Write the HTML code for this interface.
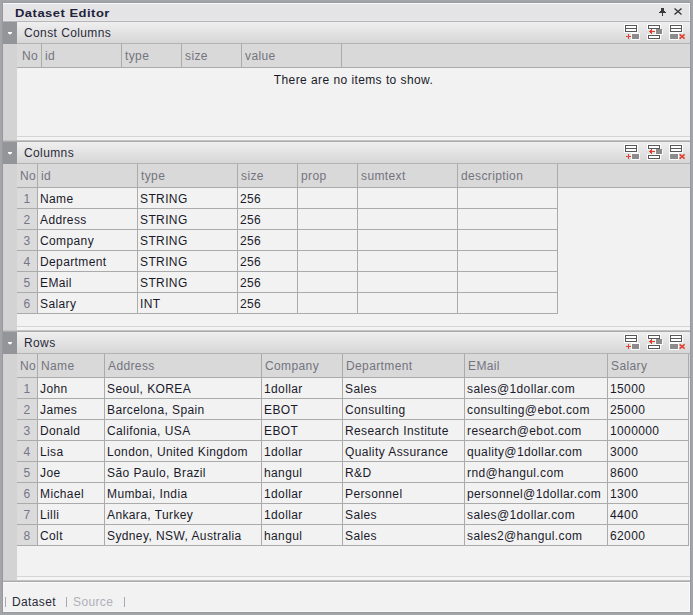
<!DOCTYPE html><html><head><meta charset="utf-8"><style>
*{margin:0;padding:0}
body{width:693px;height:615px;position:relative;overflow:hidden;background:#a3a5a8}
div{position:absolute}
.t,.h,.d,.n{font-family:"Liberation Sans",sans-serif;font-size:12px;line-height:14px;white-space:nowrap;letter-spacing:0.38px;word-spacing:0.2px}
.h{color:#74747f}
.d{color:#1a1a2a}
.n{color:#75758a}
</style></head><body><div style="left:0px;top:0px;width:693px;height:615px;background:#a3a5a8"></div><div style="left:2px;top:2px;width:689px;height:611px;background:#97999c"></div><div style="left:3px;top:3px;width:687px;height:609px;background:#f2f2f2"></div><div style="left:3px;top:3px;width:687px;height:18px;background:#e4e4e6"></div><div style="left:3px;top:3px;width:687px;height:1px;background:#fafafa"></div><div style="left:3px;top:20px;width:687px;height:1px;background:#e8e8ea"></div><div style="left:3px;top:21px;width:687px;height:1px;background:#b6b6b8"></div><div class="t" style="left:15px;top:6px;font-weight:bold;font-size:13px;letter-spacing:0.48px;word-spacing:0;color:#22223a;transform:scaleY(0.9);transform-origin:0 11px">Dataset Editor</div><div style="left:17px;top:22px;width:673px;height:21px;background:linear-gradient(#efefef,#d6d6d6)"></div><div style="left:3px;top:22px;width:14px;height:22px;background:#939598"></div><div style="left:8px;top:32px;width:4px;height:1px;background:#fff"></div><div style="left:9px;top:33px;width:2px;height:1px;background:#fff"></div><div style="left:8px;top:33px;width:1px;height:1px;background:#c8c8ca"></div><div style="left:11px;top:33px;width:1px;height:1px;background:#c8c8ca"></div><div style="left:9px;top:34px;width:2px;height:1px;background:#b0b0b2"></div><div style="left:17px;top:43px;width:673px;height:1px;background:#b3b3b6"></div><div class="t" style="left:24px;top:26px;color:#2a2a3a">Const Columns</div><div style="left:3px;top:44px;width:14px;height:97px;background:#d3d3d3"></div><div style="left:17px;top:44px;width:673px;height:23px;background:#d9d9d9"></div><div style="left:17px;top:67px;width:673px;height:1px;background:#ababab"></div><div style="left:17px;top:68px;width:673px;height:68px;background:#f2f2f2"></div><div style="left:17px;top:136px;width:673px;height:1px;background:#d5d5d5"></div><div style="left:17px;top:137px;width:673px;height:3px;background:#f4f4f4"></div><div style="left:3px;top:140px;width:687px;height:1px;background:#c2c2c2"></div><div style="left:3px;top:141px;width:687px;height:1px;background:#ababab"></div><div style="left:41px;top:44px;width:1px;height:23px;background:#ababab"></div><div style="left:121px;top:44px;width:1px;height:23px;background:#ababab"></div><div style="left:181px;top:44px;width:1px;height:23px;background:#ababab"></div><div style="left:241px;top:44px;width:1px;height:23px;background:#ababab"></div><div style="left:341px;top:44px;width:1px;height:23px;background:#ababab"></div><div class="h" style="left:18px;top:49px;width:24px;text-align:center;">No</div><div class="h" style="left:45px;top:49px;">id</div><div class="h" style="left:125px;top:49px;">type</div><div class="h" style="left:185px;top:49px;">size</div><div class="h" style="left:245px;top:49px;">value</div><div class="d" style="left:17px;top:73px;width:673px;text-align:center;color:#1a1a2a">There are no items to show.</div><div style="left:17px;top:142px;width:673px;height:21px;background:linear-gradient(#efefef,#d6d6d6)"></div><div style="left:3px;top:142px;width:14px;height:22px;background:#939598"></div><div style="left:8px;top:152px;width:4px;height:1px;background:#fff"></div><div style="left:9px;top:153px;width:2px;height:1px;background:#fff"></div><div style="left:8px;top:153px;width:1px;height:1px;background:#c8c8ca"></div><div style="left:11px;top:153px;width:1px;height:1px;background:#c8c8ca"></div><div style="left:9px;top:154px;width:2px;height:1px;background:#b0b0b2"></div><div style="left:17px;top:163px;width:673px;height:1px;background:#b3b3b6"></div><div class="t" style="left:24px;top:146px;color:#2a2a3a">Columns</div><div style="left:3px;top:164px;width:14px;height:167px;background:#d3d3d3"></div><div style="left:17px;top:164px;width:673px;height:23px;background:#d9d9d9"></div><div style="left:17px;top:187px;width:673px;height:1px;background:#ababab"></div><div style="left:17px;top:188px;width:673px;height:138px;background:#f2f2f2"></div><div style="left:17px;top:326px;width:673px;height:1px;background:#d5d5d5"></div><div style="left:17px;top:327px;width:673px;height:3px;background:#f4f4f4"></div><div style="left:3px;top:330px;width:687px;height:1px;background:#c2c2c2"></div><div style="left:3px;top:331px;width:687px;height:1px;background:#ababab"></div><div style="left:37px;top:164px;width:1px;height:23px;background:#ababab"></div><div style="left:137px;top:164px;width:1px;height:23px;background:#ababab"></div><div style="left:237px;top:164px;width:1px;height:23px;background:#ababab"></div><div style="left:297px;top:164px;width:1px;height:23px;background:#ababab"></div><div style="left:357px;top:164px;width:1px;height:23px;background:#ababab"></div><div style="left:457px;top:164px;width:1px;height:23px;background:#ababab"></div><div style="left:557px;top:164px;width:1px;height:23px;background:#ababab"></div><div class="h" style="left:18px;top:169px;width:20px;text-align:center;">No</div><div class="h" style="left:41px;top:169px;">id</div><div class="h" style="left:141px;top:169px;">type</div><div class="h" style="left:241px;top:169px;">size</div><div class="h" style="left:301px;top:169px;">prop</div><div class="h" style="left:361px;top:169px;">sumtext</div><div class="h" style="left:461px;top:169px;">description</div><div style="left:17px;top:188px;width:20px;height:20px;background:#dbdbdb"></div><div style="left:17px;top:208px;width:541px;height:1px;background:#ababab"></div><div style="left:37px;top:188px;width:1px;height:21px;background:#ababab"></div><div style="left:137px;top:188px;width:1px;height:21px;background:#ababab"></div><div style="left:237px;top:188px;width:1px;height:21px;background:#ababab"></div><div style="left:297px;top:188px;width:1px;height:21px;background:#ababab"></div><div style="left:357px;top:188px;width:1px;height:21px;background:#ababab"></div><div style="left:457px;top:188px;width:1px;height:21px;background:#ababab"></div><div style="left:557px;top:188px;width:1px;height:21px;background:#ababab"></div><div class="n" style="left:17px;top:192px;width:20px;text-align:center;">1</div><div class="d" style="left:40px;top:192px;">Name</div><div class="d" style="left:140px;top:192px;">STRING</div><div class="d" style="left:240px;top:192px;">256</div><div style="left:17px;top:209px;width:20px;height:20px;background:#dbdbdb"></div><div style="left:17px;top:229px;width:541px;height:1px;background:#ababab"></div><div style="left:37px;top:209px;width:1px;height:21px;background:#ababab"></div><div style="left:137px;top:209px;width:1px;height:21px;background:#ababab"></div><div style="left:237px;top:209px;width:1px;height:21px;background:#ababab"></div><div style="left:297px;top:209px;width:1px;height:21px;background:#ababab"></div><div style="left:357px;top:209px;width:1px;height:21px;background:#ababab"></div><div style="left:457px;top:209px;width:1px;height:21px;background:#ababab"></div><div style="left:557px;top:209px;width:1px;height:21px;background:#ababab"></div><div class="n" style="left:17px;top:213px;width:20px;text-align:center;">2</div><div class="d" style="left:40px;top:213px;">Address</div><div class="d" style="left:140px;top:213px;">STRING</div><div class="d" style="left:240px;top:213px;">256</div><div style="left:17px;top:230px;width:20px;height:20px;background:#dbdbdb"></div><div style="left:17px;top:250px;width:541px;height:1px;background:#ababab"></div><div style="left:37px;top:230px;width:1px;height:21px;background:#ababab"></div><div style="left:137px;top:230px;width:1px;height:21px;background:#ababab"></div><div style="left:237px;top:230px;width:1px;height:21px;background:#ababab"></div><div style="left:297px;top:230px;width:1px;height:21px;background:#ababab"></div><div style="left:357px;top:230px;width:1px;height:21px;background:#ababab"></div><div style="left:457px;top:230px;width:1px;height:21px;background:#ababab"></div><div style="left:557px;top:230px;width:1px;height:21px;background:#ababab"></div><div class="n" style="left:17px;top:234px;width:20px;text-align:center;">3</div><div class="d" style="left:40px;top:234px;">Company</div><div class="d" style="left:140px;top:234px;">STRING</div><div class="d" style="left:240px;top:234px;">256</div><div style="left:17px;top:251px;width:20px;height:20px;background:#dbdbdb"></div><div style="left:17px;top:271px;width:541px;height:1px;background:#ababab"></div><div style="left:37px;top:251px;width:1px;height:21px;background:#ababab"></div><div style="left:137px;top:251px;width:1px;height:21px;background:#ababab"></div><div style="left:237px;top:251px;width:1px;height:21px;background:#ababab"></div><div style="left:297px;top:251px;width:1px;height:21px;background:#ababab"></div><div style="left:357px;top:251px;width:1px;height:21px;background:#ababab"></div><div style="left:457px;top:251px;width:1px;height:21px;background:#ababab"></div><div style="left:557px;top:251px;width:1px;height:21px;background:#ababab"></div><div class="n" style="left:17px;top:255px;width:20px;text-align:center;">4</div><div class="d" style="left:40px;top:255px;">Department</div><div class="d" style="left:140px;top:255px;">STRING</div><div class="d" style="left:240px;top:255px;">256</div><div style="left:17px;top:272px;width:20px;height:20px;background:#dbdbdb"></div><div style="left:17px;top:292px;width:541px;height:1px;background:#ababab"></div><div style="left:37px;top:272px;width:1px;height:21px;background:#ababab"></div><div style="left:137px;top:272px;width:1px;height:21px;background:#ababab"></div><div style="left:237px;top:272px;width:1px;height:21px;background:#ababab"></div><div style="left:297px;top:272px;width:1px;height:21px;background:#ababab"></div><div style="left:357px;top:272px;width:1px;height:21px;background:#ababab"></div><div style="left:457px;top:272px;width:1px;height:21px;background:#ababab"></div><div style="left:557px;top:272px;width:1px;height:21px;background:#ababab"></div><div class="n" style="left:17px;top:276px;width:20px;text-align:center;">5</div><div class="d" style="left:40px;top:276px;">EMail</div><div class="d" style="left:140px;top:276px;">STRING</div><div class="d" style="left:240px;top:276px;">256</div><div style="left:17px;top:293px;width:20px;height:20px;background:#dbdbdb"></div><div style="left:17px;top:313px;width:541px;height:1px;background:#ababab"></div><div style="left:37px;top:293px;width:1px;height:21px;background:#ababab"></div><div style="left:137px;top:293px;width:1px;height:21px;background:#ababab"></div><div style="left:237px;top:293px;width:1px;height:21px;background:#ababab"></div><div style="left:297px;top:293px;width:1px;height:21px;background:#ababab"></div><div style="left:357px;top:293px;width:1px;height:21px;background:#ababab"></div><div style="left:457px;top:293px;width:1px;height:21px;background:#ababab"></div><div style="left:557px;top:293px;width:1px;height:21px;background:#ababab"></div><div class="n" style="left:17px;top:297px;width:20px;text-align:center;">6</div><div class="d" style="left:40px;top:297px;">Salary</div><div class="d" style="left:140px;top:297px;">INT</div><div class="d" style="left:240px;top:297px;">256</div><div style="left:17px;top:332px;width:673px;height:21px;background:linear-gradient(#efefef,#d6d6d6)"></div><div style="left:3px;top:332px;width:14px;height:22px;background:#939598"></div><div style="left:8px;top:342px;width:4px;height:1px;background:#fff"></div><div style="left:9px;top:343px;width:2px;height:1px;background:#fff"></div><div style="left:8px;top:343px;width:1px;height:1px;background:#c8c8ca"></div><div style="left:11px;top:343px;width:1px;height:1px;background:#c8c8ca"></div><div style="left:9px;top:344px;width:2px;height:1px;background:#b0b0b2"></div><div style="left:17px;top:353px;width:673px;height:1px;background:#b3b3b6"></div><div class="t" style="left:24px;top:336px;color:#2a2a3a">Rows</div><div style="left:3px;top:354px;width:14px;height:227px;background:#d3d3d3"></div><div style="left:17px;top:354px;width:673px;height:23px;background:#d9d9d9"></div><div style="left:17px;top:377px;width:673px;height:1px;background:#ababab"></div><div style="left:17px;top:378px;width:673px;height:198px;background:#f2f2f2"></div><div style="left:17px;top:576px;width:673px;height:1px;background:#d5d5d5"></div><div style="left:17px;top:577px;width:673px;height:3px;background:#f4f4f4"></div><div style="left:3px;top:580px;width:687px;height:1px;background:#c2c2c2"></div><div style="left:3px;top:581px;width:687px;height:1px;background:#ababab"></div><div style="left:37px;top:354px;width:1px;height:23px;background:#ababab"></div><div style="left:104px;top:354px;width:1px;height:23px;background:#ababab"></div><div style="left:261px;top:354px;width:1px;height:23px;background:#ababab"></div><div style="left:342px;top:354px;width:1px;height:23px;background:#ababab"></div><div style="left:464px;top:354px;width:1px;height:23px;background:#ababab"></div><div style="left:607px;top:354px;width:1px;height:23px;background:#ababab"></div><div style="left:688px;top:354px;width:1px;height:23px;background:#ababab"></div><div class="h" style="left:18px;top:359px;width:20px;text-align:center;">No</div><div class="h" style="left:41px;top:359px;">Name</div><div class="h" style="left:108px;top:359px;">Address</div><div class="h" style="left:265px;top:359px;">Company</div><div class="h" style="left:346px;top:359px;">Department</div><div class="h" style="left:468px;top:359px;">EMail</div><div class="h" style="left:611px;top:359px;">Salary</div><div style="left:17px;top:378px;width:20px;height:20px;background:#dbdbdb"></div><div style="left:17px;top:398px;width:672px;height:1px;background:#ababab"></div><div style="left:37px;top:378px;width:1px;height:21px;background:#ababab"></div><div style="left:104px;top:378px;width:1px;height:21px;background:#ababab"></div><div style="left:261px;top:378px;width:1px;height:21px;background:#ababab"></div><div style="left:342px;top:378px;width:1px;height:21px;background:#ababab"></div><div style="left:464px;top:378px;width:1px;height:21px;background:#ababab"></div><div style="left:607px;top:378px;width:1px;height:21px;background:#ababab"></div><div style="left:688px;top:378px;width:1px;height:21px;background:#ababab"></div><div class="n" style="left:17px;top:382px;width:20px;text-align:center;">1</div><div class="d" style="left:40px;top:382px;">John</div><div class="d" style="left:107px;top:382px;">Seoul, KOREA</div><div class="d" style="left:264px;top:382px;">1dollar</div><div class="d" style="left:345px;top:382px;">Sales</div><div class="d" style="left:467px;top:382px;">sales@1dollar.com</div><div class="d" style="left:610px;top:382px;">15000</div><div style="left:17px;top:399px;width:20px;height:20px;background:#dbdbdb"></div><div style="left:17px;top:419px;width:672px;height:1px;background:#ababab"></div><div style="left:37px;top:399px;width:1px;height:21px;background:#ababab"></div><div style="left:104px;top:399px;width:1px;height:21px;background:#ababab"></div><div style="left:261px;top:399px;width:1px;height:21px;background:#ababab"></div><div style="left:342px;top:399px;width:1px;height:21px;background:#ababab"></div><div style="left:464px;top:399px;width:1px;height:21px;background:#ababab"></div><div style="left:607px;top:399px;width:1px;height:21px;background:#ababab"></div><div style="left:688px;top:399px;width:1px;height:21px;background:#ababab"></div><div class="n" style="left:17px;top:403px;width:20px;text-align:center;">2</div><div class="d" style="left:40px;top:403px;">James</div><div class="d" style="left:107px;top:403px;">Barcelona, Spain</div><div class="d" style="left:264px;top:403px;">EBOT</div><div class="d" style="left:345px;top:403px;">Consulting</div><div class="d" style="left:467px;top:403px;">consulting@ebot.com</div><div class="d" style="left:610px;top:403px;">25000</div><div style="left:17px;top:420px;width:20px;height:20px;background:#dbdbdb"></div><div style="left:17px;top:440px;width:672px;height:1px;background:#ababab"></div><div style="left:37px;top:420px;width:1px;height:21px;background:#ababab"></div><div style="left:104px;top:420px;width:1px;height:21px;background:#ababab"></div><div style="left:261px;top:420px;width:1px;height:21px;background:#ababab"></div><div style="left:342px;top:420px;width:1px;height:21px;background:#ababab"></div><div style="left:464px;top:420px;width:1px;height:21px;background:#ababab"></div><div style="left:607px;top:420px;width:1px;height:21px;background:#ababab"></div><div style="left:688px;top:420px;width:1px;height:21px;background:#ababab"></div><div class="n" style="left:17px;top:424px;width:20px;text-align:center;">3</div><div class="d" style="left:40px;top:424px;">Donald</div><div class="d" style="left:107px;top:424px;">Califonia, USA</div><div class="d" style="left:264px;top:424px;">EBOT</div><div class="d" style="left:345px;top:424px;">Research Institute</div><div class="d" style="left:467px;top:424px;">research@ebot.com</div><div class="d" style="left:610px;top:424px;">1000000</div><div style="left:17px;top:441px;width:20px;height:20px;background:#dbdbdb"></div><div style="left:17px;top:461px;width:672px;height:1px;background:#ababab"></div><div style="left:37px;top:441px;width:1px;height:21px;background:#ababab"></div><div style="left:104px;top:441px;width:1px;height:21px;background:#ababab"></div><div style="left:261px;top:441px;width:1px;height:21px;background:#ababab"></div><div style="left:342px;top:441px;width:1px;height:21px;background:#ababab"></div><div style="left:464px;top:441px;width:1px;height:21px;background:#ababab"></div><div style="left:607px;top:441px;width:1px;height:21px;background:#ababab"></div><div style="left:688px;top:441px;width:1px;height:21px;background:#ababab"></div><div class="n" style="left:17px;top:445px;width:20px;text-align:center;">4</div><div class="d" style="left:40px;top:445px;">Lisa</div><div class="d" style="left:107px;top:445px;">London, United Kingdom</div><div class="d" style="left:264px;top:445px;">1dollar</div><div class="d" style="left:345px;top:445px;">Quality Assurance</div><div class="d" style="left:467px;top:445px;">quality@1dollar.com</div><div class="d" style="left:610px;top:445px;">3000</div><div style="left:17px;top:462px;width:20px;height:20px;background:#dbdbdb"></div><div style="left:17px;top:482px;width:672px;height:1px;background:#ababab"></div><div style="left:37px;top:462px;width:1px;height:21px;background:#ababab"></div><div style="left:104px;top:462px;width:1px;height:21px;background:#ababab"></div><div style="left:261px;top:462px;width:1px;height:21px;background:#ababab"></div><div style="left:342px;top:462px;width:1px;height:21px;background:#ababab"></div><div style="left:464px;top:462px;width:1px;height:21px;background:#ababab"></div><div style="left:607px;top:462px;width:1px;height:21px;background:#ababab"></div><div style="left:688px;top:462px;width:1px;height:21px;background:#ababab"></div><div class="n" style="left:17px;top:466px;width:20px;text-align:center;">5</div><div class="d" style="left:40px;top:466px;">Joe</div><div class="d" style="left:107px;top:466px;">S&atilde;o Paulo, Brazil</div><div class="d" style="left:264px;top:466px;">hangul</div><div class="d" style="left:345px;top:466px;">R&amp;D</div><div class="d" style="left:467px;top:466px;">rnd@hangul.com</div><div class="d" style="left:610px;top:466px;">8600</div><div style="left:17px;top:483px;width:20px;height:20px;background:#dbdbdb"></div><div style="left:17px;top:503px;width:672px;height:1px;background:#ababab"></div><div style="left:37px;top:483px;width:1px;height:21px;background:#ababab"></div><div style="left:104px;top:483px;width:1px;height:21px;background:#ababab"></div><div style="left:261px;top:483px;width:1px;height:21px;background:#ababab"></div><div style="left:342px;top:483px;width:1px;height:21px;background:#ababab"></div><div style="left:464px;top:483px;width:1px;height:21px;background:#ababab"></div><div style="left:607px;top:483px;width:1px;height:21px;background:#ababab"></div><div style="left:688px;top:483px;width:1px;height:21px;background:#ababab"></div><div class="n" style="left:17px;top:487px;width:20px;text-align:center;">6</div><div class="d" style="left:40px;top:487px;">Michael</div><div class="d" style="left:107px;top:487px;">Mumbai, India</div><div class="d" style="left:264px;top:487px;">1dollar</div><div class="d" style="left:345px;top:487px;">Personnel</div><div class="d" style="left:467px;top:487px;">personnel@1dollar.com</div><div class="d" style="left:610px;top:487px;">1300</div><div style="left:17px;top:504px;width:20px;height:20px;background:#dbdbdb"></div><div style="left:17px;top:524px;width:672px;height:1px;background:#ababab"></div><div style="left:37px;top:504px;width:1px;height:21px;background:#ababab"></div><div style="left:104px;top:504px;width:1px;height:21px;background:#ababab"></div><div style="left:261px;top:504px;width:1px;height:21px;background:#ababab"></div><div style="left:342px;top:504px;width:1px;height:21px;background:#ababab"></div><div style="left:464px;top:504px;width:1px;height:21px;background:#ababab"></div><div style="left:607px;top:504px;width:1px;height:21px;background:#ababab"></div><div style="left:688px;top:504px;width:1px;height:21px;background:#ababab"></div><div class="n" style="left:17px;top:508px;width:20px;text-align:center;">7</div><div class="d" style="left:40px;top:508px;">Lilli</div><div class="d" style="left:107px;top:508px;">Ankara, Turkey</div><div class="d" style="left:264px;top:508px;">1dollar</div><div class="d" style="left:345px;top:508px;">Sales</div><div class="d" style="left:467px;top:508px;">sales@1dollar.com</div><div class="d" style="left:610px;top:508px;">4400</div><div style="left:17px;top:525px;width:20px;height:20px;background:#dbdbdb"></div><div style="left:17px;top:545px;width:672px;height:1px;background:#ababab"></div><div style="left:37px;top:525px;width:1px;height:21px;background:#ababab"></div><div style="left:104px;top:525px;width:1px;height:21px;background:#ababab"></div><div style="left:261px;top:525px;width:1px;height:21px;background:#ababab"></div><div style="left:342px;top:525px;width:1px;height:21px;background:#ababab"></div><div style="left:464px;top:525px;width:1px;height:21px;background:#ababab"></div><div style="left:607px;top:525px;width:1px;height:21px;background:#ababab"></div><div style="left:688px;top:525px;width:1px;height:21px;background:#ababab"></div><div class="n" style="left:17px;top:529px;width:20px;text-align:center;">8</div><div class="d" style="left:40px;top:529px;">Colt</div><div class="d" style="left:107px;top:529px;">Sydney, NSW, Australia</div><div class="d" style="left:264px;top:529px;">hangul</div><div class="d" style="left:345px;top:529px;">Sales</div><div class="d" style="left:467px;top:529px;">sales2@hangul.com</div><div class="d" style="left:610px;top:529px;">62000</div><div style="left:3px;top:582px;width:687px;height:1px;background:#fafafa"></div><div style="left:5px;top:597px;width:1px;height:10px;background:#a8a8b0"></div><div style="left:66px;top:597px;width:1px;height:10px;background:#a8a8b0"></div><div style="left:124px;top:597px;width:1px;height:10px;background:#a8a8b0"></div><div class="d" style="left:12px;top:595px;color:#2a2a3a">Dataset</div><div class="d" style="left:73px;top:595px;color:#b0b0b8">Source</div><div style="left:3px;top:611px;width:687px;height:1px;background:#fafafa"></div><div style="left:689px;top:3px;width:1px;height:18px;background:#f4f4f6"></div><div style="left:689px;top:582px;width:1px;height:30px;background:#fafafa"></div><svg style="position:absolute;left:0;top:0" width="693" height="30"><g shape-rendering="crispEdges" fill="#3a3a3a"><rect x="661" y="8" width="3" height="3"/><rect x="660" y="11" width="5" height="1"/><rect x="659" y="12" width="7" height="1"/><rect x="662" y="13" width="1" height="3"/></g><path d="M674.5 8.5 L681.5 14.5 M681.5 8.5 L674.5 14.5" stroke="#3a3a3a" stroke-width="1.5" fill="none"/></svg><svg style="position:absolute;left:625px;top:25px;overflow:visible" width="16" height="16" shape-rendering="crispEdges"><rect x="-1" y="-1" width="14" height="9" fill="rgba(255,255,255,0.85)"/><rect x="0.5" y="0.5" width="11" height="6" fill="#fff" stroke="#585858" stroke-width="1"/><rect x="1" y="3" width="10" height="1" fill="#585858"/><rect x="6" y="8" width="9" height="7" fill="rgba(255,255,255,0.85)"/><rect x="7" y="9" width="7" height="5" fill="#8c8c8c"/><rect x="1" y="11" width="5" height="1" fill="#e2402f"/><rect x="3" y="9" width="1" height="5" fill="#e2402f"/></svg><svg style="position:absolute;left:648px;top:25px;overflow:visible" width="16" height="16" shape-rendering="crispEdges"><rect x="-1" y="-1" width="14" height="6" fill="rgba(255,255,255,0.85)"/><rect x="7" y="5" width="8" height="5" fill="rgba(255,255,255,0.85)"/><rect x="-1" y="9" width="14" height="6" fill="rgba(255,255,255,0.85)"/><rect x="0.5" y="0.5" width="11" height="3" fill="#fff" stroke="#585858" stroke-width="1"/><rect x="8" y="4" width="6" height="5" fill="#8c8c8c"/><rect x="1" y="6" width="6" height="1" fill="#e2402f"/><rect x="2" y="5" width="1" height="3" fill="#e2402f"/><rect x="3" y="4" width="1" height="5" fill="#e2402f"/><rect x="0.5" y="10.5" width="11" height="3" fill="#fff" stroke="#585858" stroke-width="1"/></svg><svg style="position:absolute;left:670px;top:25px;overflow:visible" width="16" height="16" shape-rendering="crispEdges"><rect x="-1" y="-1" width="14" height="9" fill="rgba(255,255,255,0.85)"/><rect x="0.5" y="0.5" width="11" height="6" fill="#fff" stroke="#585858" stroke-width="1"/><rect x="1" y="3" width="10" height="1" fill="#585858"/><rect x="-1" y="8" width="10" height="7" fill="rgba(255,255,255,0.85)"/><rect x="0" y="9" width="8" height="5" fill="#8c8c8c"/><path d="M9.6 9.4 L14.6 13.6 M14.6 9.4 L9.6 13.6" stroke="#e2402f" stroke-width="1.6" fill="none" shape-rendering="geometricPrecision"/></svg><svg style="position:absolute;left:625px;top:145px;overflow:visible" width="16" height="16" shape-rendering="crispEdges"><rect x="-1" y="-1" width="14" height="9" fill="rgba(255,255,255,0.85)"/><rect x="0.5" y="0.5" width="11" height="6" fill="#fff" stroke="#585858" stroke-width="1"/><rect x="1" y="3" width="10" height="1" fill="#585858"/><rect x="6" y="8" width="9" height="7" fill="rgba(255,255,255,0.85)"/><rect x="7" y="9" width="7" height="5" fill="#8c8c8c"/><rect x="1" y="11" width="5" height="1" fill="#e2402f"/><rect x="3" y="9" width="1" height="5" fill="#e2402f"/></svg><svg style="position:absolute;left:648px;top:145px;overflow:visible" width="16" height="16" shape-rendering="crispEdges"><rect x="-1" y="-1" width="14" height="6" fill="rgba(255,255,255,0.85)"/><rect x="7" y="5" width="8" height="5" fill="rgba(255,255,255,0.85)"/><rect x="-1" y="9" width="14" height="6" fill="rgba(255,255,255,0.85)"/><rect x="0.5" y="0.5" width="11" height="3" fill="#fff" stroke="#585858" stroke-width="1"/><rect x="8" y="4" width="6" height="5" fill="#8c8c8c"/><rect x="1" y="6" width="6" height="1" fill="#e2402f"/><rect x="2" y="5" width="1" height="3" fill="#e2402f"/><rect x="3" y="4" width="1" height="5" fill="#e2402f"/><rect x="0.5" y="10.5" width="11" height="3" fill="#fff" stroke="#585858" stroke-width="1"/></svg><svg style="position:absolute;left:670px;top:145px;overflow:visible" width="16" height="16" shape-rendering="crispEdges"><rect x="-1" y="-1" width="14" height="9" fill="rgba(255,255,255,0.85)"/><rect x="0.5" y="0.5" width="11" height="6" fill="#fff" stroke="#585858" stroke-width="1"/><rect x="1" y="3" width="10" height="1" fill="#585858"/><rect x="-1" y="8" width="10" height="7" fill="rgba(255,255,255,0.85)"/><rect x="0" y="9" width="8" height="5" fill="#8c8c8c"/><path d="M9.6 9.4 L14.6 13.6 M14.6 9.4 L9.6 13.6" stroke="#e2402f" stroke-width="1.6" fill="none" shape-rendering="geometricPrecision"/></svg><svg style="position:absolute;left:625px;top:335px;overflow:visible" width="16" height="16" shape-rendering="crispEdges"><rect x="-1" y="-1" width="14" height="9" fill="rgba(255,255,255,0.85)"/><rect x="0.5" y="0.5" width="11" height="6" fill="#fff" stroke="#585858" stroke-width="1"/><rect x="1" y="3" width="10" height="1" fill="#585858"/><rect x="6" y="8" width="9" height="7" fill="rgba(255,255,255,0.85)"/><rect x="7" y="9" width="7" height="5" fill="#8c8c8c"/><rect x="1" y="11" width="5" height="1" fill="#e2402f"/><rect x="3" y="9" width="1" height="5" fill="#e2402f"/></svg><svg style="position:absolute;left:648px;top:335px;overflow:visible" width="16" height="16" shape-rendering="crispEdges"><rect x="-1" y="-1" width="14" height="6" fill="rgba(255,255,255,0.85)"/><rect x="7" y="5" width="8" height="5" fill="rgba(255,255,255,0.85)"/><rect x="-1" y="9" width="14" height="6" fill="rgba(255,255,255,0.85)"/><rect x="0.5" y="0.5" width="11" height="3" fill="#fff" stroke="#585858" stroke-width="1"/><rect x="8" y="4" width="6" height="5" fill="#8c8c8c"/><rect x="1" y="6" width="6" height="1" fill="#e2402f"/><rect x="2" y="5" width="1" height="3" fill="#e2402f"/><rect x="3" y="4" width="1" height="5" fill="#e2402f"/><rect x="0.5" y="10.5" width="11" height="3" fill="#fff" stroke="#585858" stroke-width="1"/></svg><svg style="position:absolute;left:670px;top:335px;overflow:visible" width="16" height="16" shape-rendering="crispEdges"><rect x="-1" y="-1" width="14" height="9" fill="rgba(255,255,255,0.85)"/><rect x="0.5" y="0.5" width="11" height="6" fill="#fff" stroke="#585858" stroke-width="1"/><rect x="1" y="3" width="10" height="1" fill="#585858"/><rect x="-1" y="8" width="10" height="7" fill="rgba(255,255,255,0.85)"/><rect x="0" y="9" width="8" height="5" fill="#8c8c8c"/><path d="M9.6 9.4 L14.6 13.6 M14.6 9.4 L9.6 13.6" stroke="#e2402f" stroke-width="1.6" fill="none" shape-rendering="geometricPrecision"/></svg></body></html>
